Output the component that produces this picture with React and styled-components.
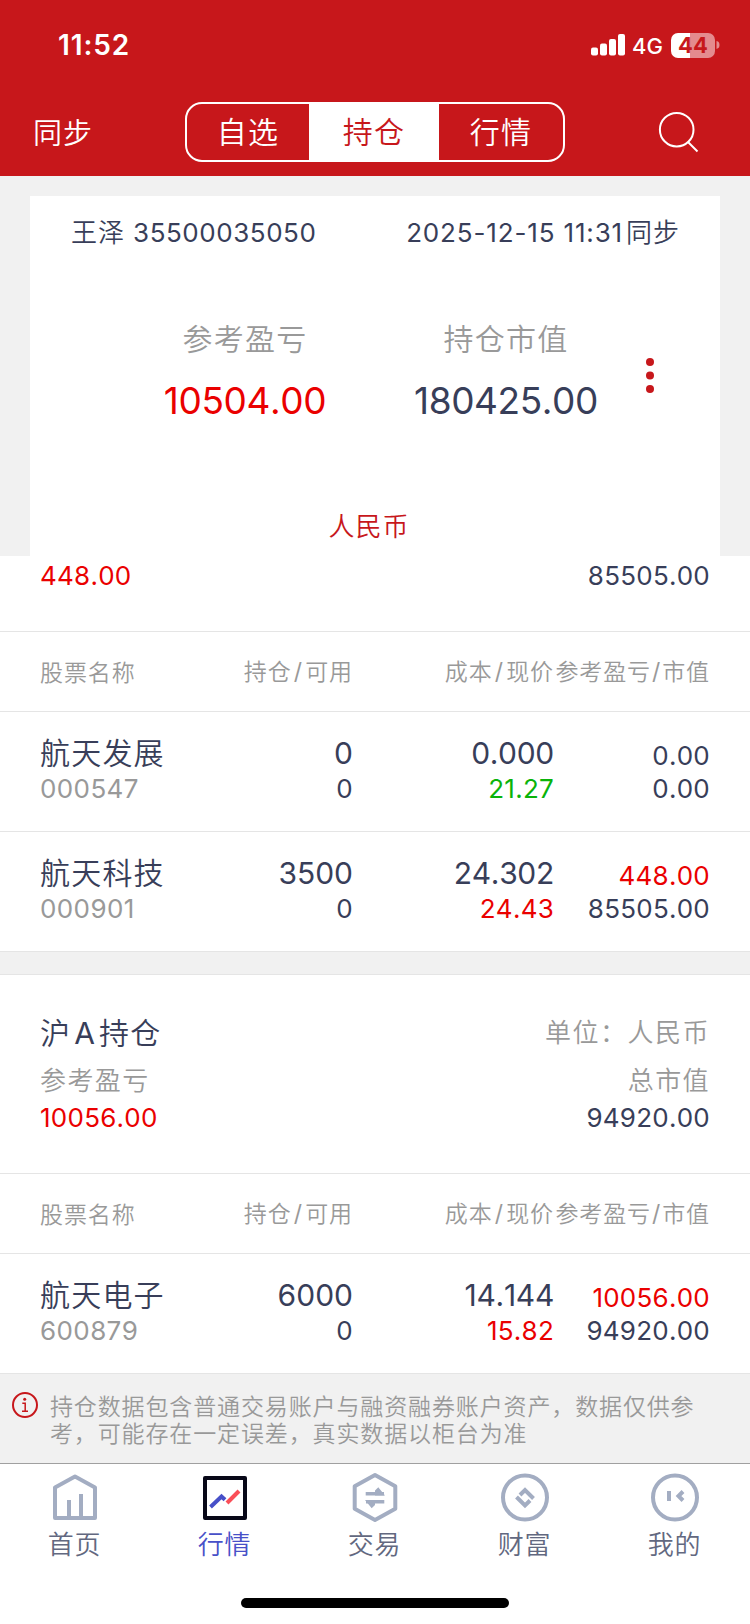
import React, { Fragment } from 'react';
import styled, { createGlobalStyle } from 'styled-components';

const colors = {
  brand: '#c7171b',
  ink: '#383e59',
  muted: '#999999',
  up: '#ea0000',
  down: '#0ab30a',
  page: '#f1f1f1',
  line: '#e5e5e5',
  tabIcon: '#a3adc2',
  tabText: '#626880',
  active: '#4750c8',
};

const GlobalStyle = createGlobalStyle`
  * {
    box-sizing: border-box;
  }

  body {
    margin: 0;
    background: #fff;
    color: ${colors.ink};
    font-family: Inter, 'Noto Sans CJK SC', sans-serif;
    font-size: 26px;
    font-kerning: none;
  }
`;

const Screen = styled.div`
  width: 750px;
  height: 1624px;
  display: flex;
  flex-direction: column;
  overflow: hidden;
`;

/* one line of figures, `box` is the height of the line */
const Text = styled.span`
  display: block;
  margin-right: -1px;
  font-size: ${(props) => props.$size || 26}px;
  font-weight: ${(props) => props.$weight || 400};
  line-height: ${(props) => props.$box || 36}px;
  letter-spacing: ${(props) => (props.$track === undefined ? 0.25 : props.$track)}px;
  color: ${(props) => props.$color || colors.ink};
  white-space: nowrap;
`;

const Cjk = styled(Text)`
  font-family: 'Noto Sans CJK SC', sans-serif;
  font-weight: 350;
  letter-spacing: ${(props) => props.$track || 1}px;
  margin-top: -2px;
  padding-bottom: 2px;
`;

/* latin letter or slash set between Chinese characters */
const Latin = styled.span`
  font-family: Inter, sans-serif;
  font-weight: 400;
  padding: 0 ${(props) => props.$pad}px;
`;

const Header = styled.header`
  height: 176px;
  flex: none;
  background: ${colors.brand};
  color: #fff;
`;

const StatusBar = styled.div`
  height: 90px;
  padding: 0 30px 0 58px;
  display: flex;
  align-items: center;
  justify-content: space-between;
`;

const StatusIcons = styled.div`
  display: flex;
  align-items: center;
`;

const Network = styled.span`
  font-size: 22px;
  font-weight: 500;
  line-height: 24px;
  margin: 2px 8px 0 7px;
`;

const Battery = styled.div`
  width: 44px;
  height: 25px;
  border-radius: 7px;
  background: linear-gradient(90deg, #fff 44%, #e48b8e 44%);
  color: ${colors.brand};
  font-size: 22px;
  font-weight: 700;
  line-height: 25px;
  text-align: center;
`;

const NavBar = styled.div`
  height: 84px;
  padding: 0 50px 0 33px;
  display: flex;
  align-items: center;
  justify-content: space-between;
`;

const Title = styled(Cjk)`
  margin-top: 0;
`;

const Segmented = styled.div`
  width: 380px;
  height: 60px;
  display: grid;
  grid-template-columns: 122px 130px 1fr;
  border: 2px solid #fff;
  border-radius: 17px;
  overflow: hidden;
`;

const Segment = styled.button`
  border: 0;
  padding: 0 0 3px;
  background: ${(props) => (props.$active ? '#fff' : 'transparent')};
  color: ${(props) => (props.$active ? colors.brand : '#fff')};
  font: 350 30px/53px 'Noto Sans CJK SC', sans-serif;
  letter-spacing: 1.2px;
`;

const SummaryWrap = styled.section`
  height: 380px;
  flex: none;
  padding: 20px 30px 0;
  background: ${colors.page};
`;

const Card = styled.div`
  height: 360px;
  padding-top: 19px;
  background: #fff;
`;

const AccountRow = styled.div`
  display: flex;
  justify-content: space-between;
  padding: 0 41px 0 41px;
`;

const Inline = styled.div`
  display: flex;
  align-items: center;
  gap: ${(props) => props.$gap || 0}px;
`;

const Totals = styled.div`
  margin-top: 64px;
  padding-left: 84px;
  display: grid;
  grid-template-columns: 261px 261px 1fr;
  justify-items: center;
`;

const Total = styled.div`
  display: flex;
  flex-direction: column;
  align-items: center;
`;

const Dots = styled.svg`
  margin: 43px 0 0 -57px;
`;

const Currency = styled.div`
  display: flex;
  justify-content: center;
  margin: 70px 13px 0 0;
`;

const Between = styled.div`
  display: flex;
  justify-content: space-between;
  padding: 0 41px 0 40px;
`;

const CutSection = styled.section`
  height: 76px;
  flex: none;
  padding-top: 2px;
  border-bottom: 1px solid ${colors.line};
`;

const Market = styled.section`
  height: 199px;
  flex: none;
  padding-top: 35px;
  border-bottom: 1px solid ${colors.line};
`;

const columns = '170px 142px 201px 156px';

const TableHead = styled.div`
  height: 80px;
  flex: none;
  padding: 2px 0 0 40px;
  display: grid;
  grid-template-columns: ${columns};
  align-items: center;
  border-bottom: 1px solid ${colors.line};
`;

const TableRow = styled.div`
  height: 120px;
  flex: none;
  padding: 21px 0 0 40px;
  display: grid;
  grid-template-columns: ${columns};
  border-bottom: 1px solid ${colors.line};
`;

const Cell = styled.div`
  display: flex;
  flex-direction: column;
  align-items: ${(props) => (props.$left ? 'flex-start' : 'flex-end')};
`;

const Gap = styled.div`
  height: 23px;
  flex: none;
  background: ${colors.page};
  border-bottom: 1px solid ${colors.line};
`;

const Notice = styled.div`
  height: 89px;
  flex: none;
  display: flex;
  gap: 12px;
  padding: 18px 12px 0;
  background: ${colors.page};
`;

const NoticeText = styled.p`
  margin: 0;
  width: 660px;
  color: ${colors.muted};
  font: 350 23px/27px 'Noto Sans CJK SC', sans-serif;
  letter-spacing: 0.87px;
`;

const TabBar = styled.nav`
  height: 135px;
  flex: none;
  display: grid;
  grid-template-columns: repeat(5, 1fr);
  border-top: 1px solid #a0a0a0;
  background: #fff;
`;

const Tab = styled.a`
  display: flex;
  flex-direction: column;
  align-items: center;
  padding-top: 8px;
`;

const TabLabel = styled(Cjk)`
  margin-right: 1px;
`;

const HomeIndicator = styled.div`
  width: 268px;
  height: 10px;
  flex: none;
  margin: 0 auto;
  border-radius: 5px;
  background: #000;
`;

const SignalIcon = () => (
  <svg width="34" height="22" viewBox="0 0 34 22" fill="#fff">
    <rect x="0" y="13.5" width="7" height="8" rx="2" />
    <rect x="9" y="9.5" width="7" height="12" rx="2" />
    <rect x="18" y="5" width="7" height="16.5" rx="2" />
    <rect x="27" y="0" width="7" height="21.5" rx="2" />
  </svg>
);

const BatteryCap = () => (
  <svg width="5" height="8" viewBox="0 0 5 8">
    <path d="M1.5 0C4 .6 4.5 2.2 4.5 4S4 7.4 1.5 8Z" fill="#e48b8e" />
  </svg>
);

const SearchIcon = () => (
  <svg width="42" height="42" viewBox="0 0 42 42" fill="none" stroke="#fff" strokeWidth="2">
    <circle cx="18.7" cy="18.7" r="16.8" />
    <path d="M30 31L39.5 40.5" />
  </svg>
);

const InfoIcon = () => (
  <svg width="26" height="26" viewBox="0 0 26 26" fill="none" stroke={colors.brand}>
    <circle cx="13" cy="13" r="12" strokeWidth="2" />
    <circle cx="12.7" cy="7.3" r="1.5" fill={colors.brand} stroke="none" />
    <path d="M10.3 11.3h2.9v7.7M10 19.2h6" strokeWidth="1.5" />
  </svg>
);

const tabIcons = {
  home: (
    <g stroke={colors.tabIcon} strokeWidth="4" strokeLinejoin="round">
      <path d="M5 46V15.5L25 4.5L45 15.5V46Z" />
      <path d="M19 46V28M31 46V22" />
    </g>
  ),
  quotes: (
    <g strokeWidth="4">
      <rect x="5" y="6" width="40" height="40" stroke="#080818" strokeLinejoin="round" />
      <path d="M10.5 35L21.5 24.5L25 27.8" stroke={colors.active} />
      <path d="M27 31L39 19" stroke="#fa4f58" />
    </g>
  ),
  trade: (
    <g stroke={colors.tabIcon} strokeWidth="4" strokeLinejoin="round">
      <path d="M25 3L45.3 14.2V36.8L25 48L4.7 36.8V14.2Z" />
      <path d="M15.7 21.7H34M16 29.7H34.3" strokeWidth="3.6" />
      <path d="M28.3 15.2L35 23.5H25V18.5ZM21.7 36.2L15 27.9H25V32.9Z" fill={colors.tabIcon} stroke="none" />
    </g>
  ),
  wealth: (
    <g stroke={colors.tabIcon} strokeWidth="4">
      <circle cx="25" cy="25.5" r="22" />
      <path d="M20 23L25 18L33.5 26.5M16.5 25L25 33.5L30 28.5" />
    </g>
  ),
  mine: (
    <g stroke={colors.tabIcon} strokeWidth="4">
      <circle cx="25" cy="25.5" r="22" />
      <path d="M19 19V29M33 19.5L28.5 24L33 28.5" />
    </g>
  ),
};

const tabs = [
  { id: 'home', label: '首页' },
  { id: 'quotes', label: '行情', active: true },
  { id: 'trade', label: '交易' },
  { id: 'wealth', label: '财富' },
  { id: 'mine', label: '我的' },
];

const titles = [
  { first: '股票名称' },
  { first: '持仓', second: '可用', pad: 2.2 },
  { first: '成本', second: '现价', pad: 2.2 },
  { first: '参考盈亏', second: '市值', pad: 1 },
];

const shenzhen = [
  { name: '航天发展', code: '000547', held: '0', usable: '0', cost: '0.000', price: '21.27', trend: 'down', profit: '0.00', value: '0.00' },
  { name: '航天科技', code: '000901', held: '3500', usable: '0', cost: '24.302', price: '24.43', trend: 'up', profit: '448.00', value: '85505.00' },
];

const shanghai = [
  { name: '航天电子', code: '600879', held: '6000', usable: '0', cost: '14.144', price: '15.82', trend: 'up', profit: '10056.00', value: '94920.00' },
];

function Holding({ item }) {
  const gain = parseFloat(item.profit) > 0;
  return (
    <TableRow>
      <Cell $left>
        <Cjk $size={30} $track={1.2} $box={40}>{item.name}</Cjk>
        <Text $box={32} $track={0.4} $color={colors.muted}>{item.code}</Text>
      </Cell>
      <Cell>
        <Text $size={30} $track={0} $box={40}>{item.held}</Text>
        <Text $box={32}>{item.usable}</Text>
      </Cell>
      <Cell>
        <Text $size={30} $track={-0.3} $box={40}>{item.cost}</Text>
        <Text $box={32} $color={colors[item.trend]}>{item.price}</Text>
      </Cell>
      <Cell>
        <Text $box={46} $color={gain ? colors.up : colors.ink}>{item.profit}</Text>
        <Text $box={20}>{item.value}</Text>
      </Cell>
    </TableRow>
  );
}

function HoldingsTable({ items }) {
  return (
    <Fragment>
      <TableHead>
        {titles.map(({ first, second, pad }) => (
          <Cell key={first} $left={!second}>
            <Cjk $size={23} $track={0.9} $color={colors.muted}>
              {first}
              {second && <Latin $pad={pad}>/</Latin>}
              {second}
            </Cjk>
          </Cell>
        ))}
      </TableHead>
      {items.map((item) => <Holding key={item.code} item={item} />)}
    </Fragment>
  );
}

function App() {
  return (
    <Screen>
      <GlobalStyle />
      <Header>
        <StatusBar>
          <Text $size={28} $weight={600} $track={0.9} $color="#fff">11:52</Text>
          <StatusIcons>
            <SignalIcon />
            <Network>4G</Network>
            <Battery>44</Battery>
            <BatteryCap />
          </StatusIcons>
        </StatusBar>
        <NavBar>
          <Title $size={29} $color="#fff">同步</Title>
          <Segmented>
            <Segment>自选</Segment>
            <Segment $active>持仓</Segment>
            <Segment>行情</Segment>
          </Segmented>
          <SearchIcon />
        </NavBar>
      </Header>

      <SummaryWrap>
        <Card>
          <AccountRow>
            <Inline $gap={9}>
              <Cjk>王泽</Cjk>
              <Text $track={0.55}>35500035050</Text>
            </Inline>
            <Inline $gap={4}>
              <Text $track={0.85}>2025-12-15 11:31</Text>
              <Cjk>同步</Cjk>
            </Inline>
          </AccountRow>
          <Totals>
            <Total>
              <Cjk $size={30} $track={1.2} $box={48} $color={colors.muted}>参考盈亏</Cjk>
              <Text $size={37} $track={-0.4} $box={76} $color={colors.up}>10504.00</Text>
            </Total>
            <Total>
              <Cjk $size={30} $track={1.2} $box={48} $color={colors.muted}>持仓市值</Cjk>
              <Text $size={37} $track={-0.4} $box={76}>180425.00</Text>
            </Total>
            <Dots width="8" height="36" viewBox="0 0 8 36" fill={colors.brand}>
              <circle cx="4" cy="4" r="4" />
              <circle cx="4" cy="17.5" r="4" />
              <circle cx="4" cy="31" r="4" />
            </Dots>
          </Totals>
          <Currency>
            <Cjk $color={colors.brand}>人民币</Cjk>
          </Currency>
        </Card>
      </SummaryWrap>

      <CutSection>
        <Between>
          <Text $color={colors.up}>448.00</Text>
          <Text>85505.00</Text>
        </Between>
      </CutSection>
      <HoldingsTable items={shenzhen} />

      <Gap />

      <Market>
        <Between>
          <Cjk $size={30} $track={1.2} $box={46}>
            沪<Latin $pad={3}>A</Latin>持仓
          </Cjk>
          <Cjk $box={46} $track={1.5} $color={colors.muted}>单位：人民币</Cjk>
        </Between>
        <Between>
          <Cjk $box={46} $track={1.4} $color={colors.muted}>参考盈亏</Cjk>
          <Cjk $box={46} $track={1.4} $color={colors.muted}>总市值</Cjk>
        </Between>
        <Between>
          <Text $box={28} $color={colors.up}>10056.00</Text>
          <Text $box={28}>94920.00</Text>
        </Between>
      </Market>
      <HoldingsTable items={shanghai} />

      <Notice>
        <InfoIcon />
        <NoticeText>
          持仓数据包含普通交易账户与融资融券账户资产，数据仅供参考，可能存在一定误差，真实数据以柜台为准
        </NoticeText>
      </Notice>

      <TabBar>
        {tabs.map((tab) => (
          <Tab key={tab.id}>
            <svg width="50" height="52" viewBox="0 0 50 52" fill="none">{tabIcons[tab.id]}</svg>
            <TabLabel $size={26} $box={42} $track={0.8} $color={tab.active ? colors.active : colors.tabText}>
              {tab.label}
            </TabLabel>
          </Tab>
        ))}
      </TabBar>
      <HomeIndicator />
    </Screen>
  );
}

export default App;
